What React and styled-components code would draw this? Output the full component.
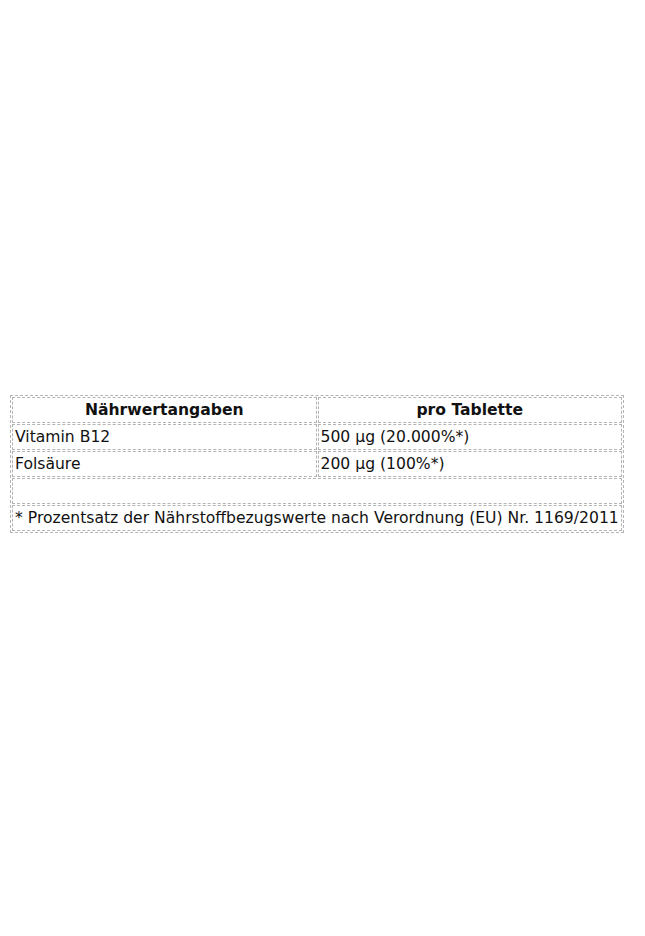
import React from "react";
import styled, { createGlobalStyle } from "styled-components";

const Global = createGlobalStyle`
  html, body { margin: 0; padding: 0; background: #fff; }
  body { font-family: "DejaVu Sans", Verdana, sans-serif; color: #111; }
`;

const Page = styled.div`
  padding: 395px 10px 0 10px;
`;

const Table = styled.table`
  width: 614px;
  border: 1px dashed #b4b4b4;
  border-collapse: separate;
  border-spacing: 1px;
  font-size: 15.6px;
`;

const Cell = styled.td`
  border: 1px dashed #b4b4b4;
  padding: 3px 2px;
  height: 18px;
  width: ${(p) => (p.$half ? "50%" : "auto")};
  text-align: ${(p) => (p.$center ? "center" : "left")};
  font-weight: ${(p) => (p.$bold ? "bold" : "normal")};
  white-space: nowrap;
  line-height: 18px;
`;

const rows = [
  ["Vitamin B12", "500 µg (20.000%*)"],
  ["Folsäure", "200 µg (100%*)"],
];

export default function App() {
  return (
    <>
      <Global />
      <Page>
        <Table>
          <tbody>
            <tr>
              <Cell $half $center $bold>Nährwertangaben</Cell>
              <Cell $half $center $bold>pro Tablette</Cell>
            </tr>
            {rows.map(([a, b]) => (
              <tr key={a}>
                <Cell>{a}</Cell>
                <Cell>{b}</Cell>
              </tr>
            ))}
            <tr>
              <Cell colSpan={2}></Cell>
            </tr>
            <tr>
              <Cell colSpan={2}>* Prozentsatz der Nährstoffbezugswerte nach Verordnung (EU) Nr. 1169/2011</Cell>
            </tr>
          </tbody>
        </Table>
      </Page>
    </>
  );
}
